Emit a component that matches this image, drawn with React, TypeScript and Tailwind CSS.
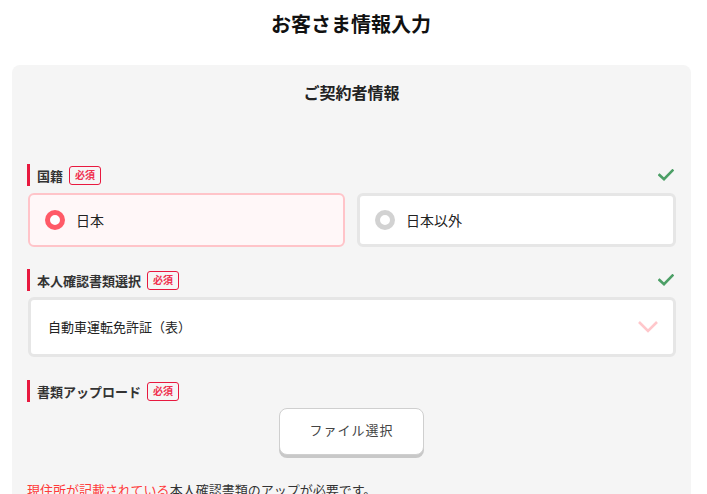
import React from "react";

const font = { fontFamily: '"Noto Sans CJK JP", "Noto Sans", sans-serif' };

function Check() {
  return (
    <svg width="16" height="12" viewBox="0 0 16 12" fill="none">
      <path d="M1.5 6 L6 10.2 L14.5 1.5" stroke="#4c9f66" strokeWidth="2.6" strokeLinecap="square" />
    </svg>
  );
}

function Label({ text, check }: { text: string; check?: boolean }) {
  return (
    <div className="flex items-center h-[22px]">
      <div className="w-[3px] h-[22px] bg-[#e8193f]" />
      <span className="ml-[7px] text-[13px] font-bold text-[#333] leading-none">{text}</span>
      <span className="ml-[6px] h-[19px] px-[5px] flex items-center border border-[#e8193f] rounded-[3px] text-[10px] font-bold text-[#f0304f] leading-none">
        必須
      </span>
      {check && (
        <span className="ml-auto mr-[2px]">
          <Check />
        </span>
      )}
    </div>
  );
}

export default function App() {
  return (
    <div className="w-[707px] h-[494px] bg-white overflow-hidden" style={font}>
      <h1 className="pt-[9px] pr-[5px] text-center text-[20px] font-bold leading-[30px] text-[#111]">お客さま情報入力</h1>
      <div className="ml-[12px] w-[679px] mt-[26px] bg-[#f5f5f5] rounded-[8px] px-[15px] pt-[15px] pb-[20px]">
        <h2 className="text-center text-[16px] font-bold leading-[24px] text-[#222]">ご契約者情報</h2>
        <div className="mt-[60px]">
          <Label text="国籍" check />
          <div className="mt-[7px] flex gap-[12px] pl-[1px]">
            <div className="flex-1 h-[54px] rounded-[6px] border-[2px] border-[#ffc4c9] bg-[#fff7f8] flex items-center pl-[15px]">
              <span className="w-[20px] h-[20px] rounded-full border-[5px] border-[#ff5a67] bg-white" />
              <span className="ml-[11px] text-[14px] text-[#222]">日本</span>
            </div>
            <div className="flex-1 h-[54px] rounded-[6px] border-[3px] border-[#e6e6e6] bg-white flex items-center pl-[15px]">
              <span className="w-[20px] h-[20px] rounded-full border-[5px] border-[#d2d2d2] bg-white" />
              <span className="ml-[11px] text-[14px] text-[#222]">日本以外</span>
            </div>
          </div>
        </div>
        <div className="mt-[22px]">
          <Label text="本人確認書類選択" check />
          <div className="mt-[6px] ml-[1px] h-[60px] rounded-[6px] border-[3px] border-[#e6e6e6] bg-white flex items-center pl-[17px] pr-[14px]">
            <span className="text-[13px] text-[#222]">自動車運転免許証（表）</span>
            <svg className="ml-auto" width="22" height="14" viewBox="0 0 22 14" fill="none">
              <path d="M2 2 L11 11 L20 2" stroke="#ffc7cb" strokeWidth="2.6" />
            </svg>
          </div>
        </div>
        <div className="mt-[23px]">
          <Label text="書類アップロード" />
          <div className="mt-[6px] flex justify-center">
            <button className="w-[145px] h-[47px] rounded-[8px] border border-[#cfcfcf] bg-white shadow-[0_3px_0_#c8c8c8] text-[13px] text-[#444] tracking-[1px] pb-[3px]">
              ファイル選択
            </button>
          </div>
        </div>
        <p className="mt-[25px] text-[13px] leading-[20px] text-[#333]">
          <span className="text-[#ff3a3a]">現住所が記載されている</span>本人確認書類のアップが必要です。
        </p>
      </div>
    </div>
  );
}
